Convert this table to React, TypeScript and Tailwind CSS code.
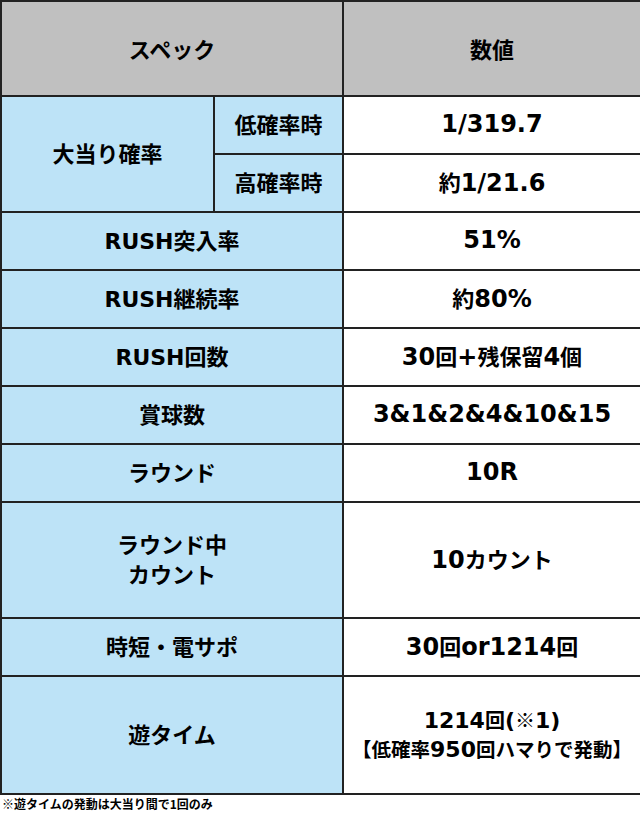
import React from "react";

// split text into latin / japanese runs so each gets its own size
const isJa = (c: string) => /[\u3000-\u30ff\u4e00-\u9fff\uff00-\uffef\u203b]/.test(c);

function Mixed({
  text,
  latin,
  ja,
}: {
  text: string;
  latin: string;
  ja: string;
}) {
  const runs: { t: string; j: boolean }[] = [];
  for (const c of text) {
    const j = isJa(c);
    const last = runs[runs.length - 1];
    if (last && last.j === j) last.t += c;
    else runs.push({ t: c, j });
  }
  return (
    <>
      {runs.map((r, i) =>
        r.j ? (
          <span key={i} className={ja} style={{ fontFamily: '"Noto Sans CJK JP", sans-serif' }}>
            {r.t}
          </span>
        ) : (
          <span key={i} className={latin} style={{ fontFamily: '"DejaVu Sans", sans-serif' }}>
            {r.t}
          </span>
        )
      )}
    </>
  );
}

const L = ({ t }: { t: string }) => <Mixed text={t} latin="text-[22px]" ja="text-[22px]" />;
const R = ({ t }: { t: string }) => <Mixed text={t} latin="text-[24px]" ja="text-[22px]" />;

const cellLeft =
  "border-2 border-[#222] bg-[#bde3f7] text-center align-middle font-bold leading-[27px] text-black whitespace-nowrap";
const cellRight =
  "border-2 border-[#222] bg-white text-center align-middle font-bold leading-[27px] text-black whitespace-nowrap";

const rows: { label: React.ReactNode; value: React.ReactNode; h: string }[] = [
  { label: <L t="RUSH突入率" />, value: <R t="51%" />, h: "h-[58px]" },
  { label: <L t="RUSH継続率" />, value: <R t="約80%" />, h: "h-[58px]" },
  { label: <L t="RUSH回数" />, value: <R t="30回+残保留4個" />, h: "h-[58px]" },
  { label: <L t="賞球数" />, value: <R t="3&1&2&4&10&15" />, h: "h-[58px]" },
  { label: <L t="ラウンド" />, value: <R t="10R" />, h: "h-[58px]" },
  {
    label: (
      <>
        <L t="ラウンド中" />
        <br />
        <L t="カウント" />
      </>
    ),
    value: <R t="10カウント" />,
    h: "h-[116px]",
  },
  { label: <L t="時短・電サポ" />, value: <R t="30回or1214回" />, h: "h-[58px]" },
  {
    label: <L t="遊タイム" />,
    value: (
      <>
        <Mixed text="1214回(※1)" latin="text-[22px]" ja="text-[20px]" />
        <br />
        <Mixed text="【低確率950回ハマりで発動】" latin="text-[22px]" ja="text-[19.5px]" />
      </>
    ),
    h: "h-[118px]",
  },
];

export default function App() {
  return (
    <div className="w-[640px] bg-white" style={{ fontFamily: '"Noto Sans CJK JP", sans-serif' }}>
      <table className="w-[640px] border-collapse table-fixed">
        <colgroup>
          <col className="w-[213px]" />
          <col className="w-[129px]" />
          <col className="w-[298px]" />
        </colgroup>
        <tbody>
          <tr className="h-[95px]">
            <th
              colSpan={2}
              className="border-2 border-[#222] bg-[#c0c0c0] text-center align-middle font-bold text-[22px] text-black"
            >
              スペック
            </th>
            <th className="border-2 border-[#222] bg-[#c0c0c0] text-center align-middle font-bold text-[22px] text-black">
              数値
            </th>
          </tr>
          <tr className="h-[58px]">
            <td rowSpan={2} className={cellLeft}>
              <L t="大当り確率" />
            </td>
            <td className={cellLeft}>
              <L t="低確率時" />
            </td>
            <td className={cellRight}>
              <R t="1/319.7" />
            </td>
          </tr>
          <tr className="h-[58px]">
            <td className={cellLeft}>
              <L t="高確率時" />
            </td>
            <td className={cellRight}>
              <R t="約1/21.6" />
            </td>
          </tr>
          {rows.map((r, i) => (
            <tr key={i} className={r.h}>
              <td colSpan={2} className={cellLeft}>
                {r.label}
              </td>
              <td className={cellRight}>{r.value}</td>
            </tr>
          ))}
        </tbody>
      </table>
      <p className="pl-[2px] pt-[2px] text-[12px] font-bold leading-[14px] text-black">
        ※遊タイムの発動は大当り間で1回のみ
      </p>
    </div>
  );
}
